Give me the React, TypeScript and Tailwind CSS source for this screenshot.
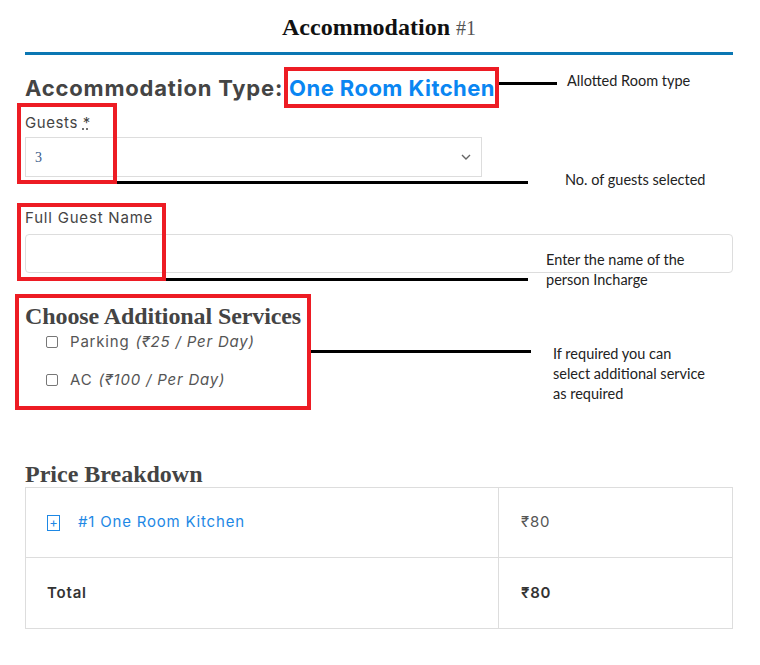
import React from "react"

const sans = { fontFamily: "Inter, 'Noto Sans', sans-serif" }

function RedBox({ className }: { className: string }) {
  return <div className={`absolute border-4 border-[#ed1c24] ${className}`} />
}

function Pointer({ className }: { className: string }) {
  return <div className={`absolute h-[3px] bg-black ${className}`} />
}

function Note({ className, children }: { className: string; children: React.ReactNode }) {
  return (
    <div className={`absolute text-[14.5px] leading-[20px] text-[#222] font-['Lato',sans-serif] ${className}`}>
      {children}
    </div>
  )
}

function Service({ name, price }: { name: string; price: string }) {
  return (
    <label className="flex h-[24px] items-center pl-[21px] text-[15px] tracking-[0.8px] text-[#555]">
      <span className="mr-[12px] h-[12px] w-[12px] shrink-0 rounded-[2px] border border-[#777] bg-white" />
      <span>{name}</span>
      <span className="ml-[6px] italic">{price}</span>
    </label>
  )
}

export default function App() {
  return (
    <div className="relative h-[665px] w-[760px] overflow-hidden bg-white" style={sans}>
      <div className="mx-[25px] flex w-[708px] flex-col">
        {/* Title */}
        <h1 className="pt-[12px] text-center font-['Liberation_Serif',serif] text-[24px] font-bold leading-[30px] text-[#111]">
          Accommodation <span className="text-[20px] font-normal text-[#555]">#1</span>
        </h1>
        <div className="mt-[9px] h-[3px] bg-[#0b77b3]" />

        <h2 className="mt-[18px] text-[22px] font-bold leading-[30px] tracking-[0.8px] text-[#444]">
          Accommodation Type: <span className="tracking-[0.45px] text-[#0a86f2]">One Room Kitchen</span>
        </h2>

        {/* Guests */}
        <label className="mt-[10px] text-[15px] leading-[20px] tracking-[0.6px] text-[#444]">
          Guests <span className="underline decoration-dotted">*</span>
        </label>
        <div className="mt-[4px] flex h-[40px] w-[457px] items-center justify-between border border-[#ddd] pl-[9px] pr-[10px]">
          <span className="font-['Liberation_Serif',serif] text-[14px] text-[#3a5a8a]">3</span>
          <svg width="10" height="6" viewBox="0 0 10 6" fill="none" stroke="#666" strokeWidth="1.4">
            <path d="M1 1l4 4 4-4" />
          </svg>
        </div>

        {/* Name */}
        <label className="mt-[31px] text-[15px] leading-[20px] tracking-[0.8px] text-[#444]">Full Guest Name</label>
        <div className="mt-[6px] h-[39px] rounded-[4px] border border-[#ddd]" />

        {/* Services */}
        <h3 className="mt-[29px] font-['Liberation_Serif',serif] text-[24px] font-bold leading-[28px] tracking-[-0.1px] text-[#444]">
          Choose Additional Services
        </h3>
        <div className="flex flex-col gap-[14px]">
          <Service name="Parking" price="(₹25 / Per Day)" />
          <Service name="AC" price="(₹100 / Per Day)" />
        </div>

        {/* Price breakdown */}
        <h3 className="mt-[69px] font-['Liberation_Serif',serif] text-[24px] font-bold leading-[26px] text-[#444]">
          Price Breakdown
        </h3>
        <table className="w-full border-collapse border border-[#ddd] text-[15px] tracking-[0.8px]">
          <tbody>
            <tr className="h-[70px]">
              <td className="w-[473px] border border-[#ddd] pl-[21px]">
                <div className="flex items-center text-[#1e88e5]">
                  <span className="mr-[18px] flex h-[16px] w-[13px] shrink-0 items-center justify-center border border-[#1e88e5] text-[13px] leading-none tracking-normal">
                    +
                  </span>
                  #1 One Room Kitchen
                </div>
              </td>
              <td className="border border-[#ddd] pl-[22px] text-[#555]">₹80</td>
            </tr>
            <tr className="h-[71px]">
              <td className="border border-[#ddd] pl-[21px] font-semibold text-[#333]">Total</td>
              <td className="border border-[#ddd] pl-[22px] font-semibold text-[#333]">₹80</td>
            </tr>
          </tbody>
        </table>
      </div>

      {/* Annotation overlay */}
      <RedBox className="left-[284px] top-[67px] h-[41px] w-[215px]" />
      <RedBox className="left-[17px] top-[103px] h-[81px] w-[100px]" />
      <RedBox className="left-[17px] top-[203px] h-[78px] w-[149px]" />
      <RedBox className="left-[15px] top-[294px] h-[116px] w-[296px]" />

      <Pointer className="left-[499px] top-[82px] w-[58px]" />
      <Pointer className="left-[117px] top-[181px] w-[411px]" />
      <Pointer className="left-[166px] top-[278px] w-[362px]" />
      <Pointer className="left-[311px] top-[350px] w-[220px]" />

      <Note className="left-[567px] top-[71px]">Allotted Room type</Note>
      <Note className="left-[565px] top-[170px]">No. of guests selected</Note>
      <Note className="left-[546px] top-[250px]">
        Enter the name of the
        <br />
        person Incharge
      </Note>
      <Note className="left-[553px] top-[344px] leading-[19.5px]">
        If required you can
        <br />
        select additional service
        <br />
        as required
      </Note>
    </div>
  )
}
